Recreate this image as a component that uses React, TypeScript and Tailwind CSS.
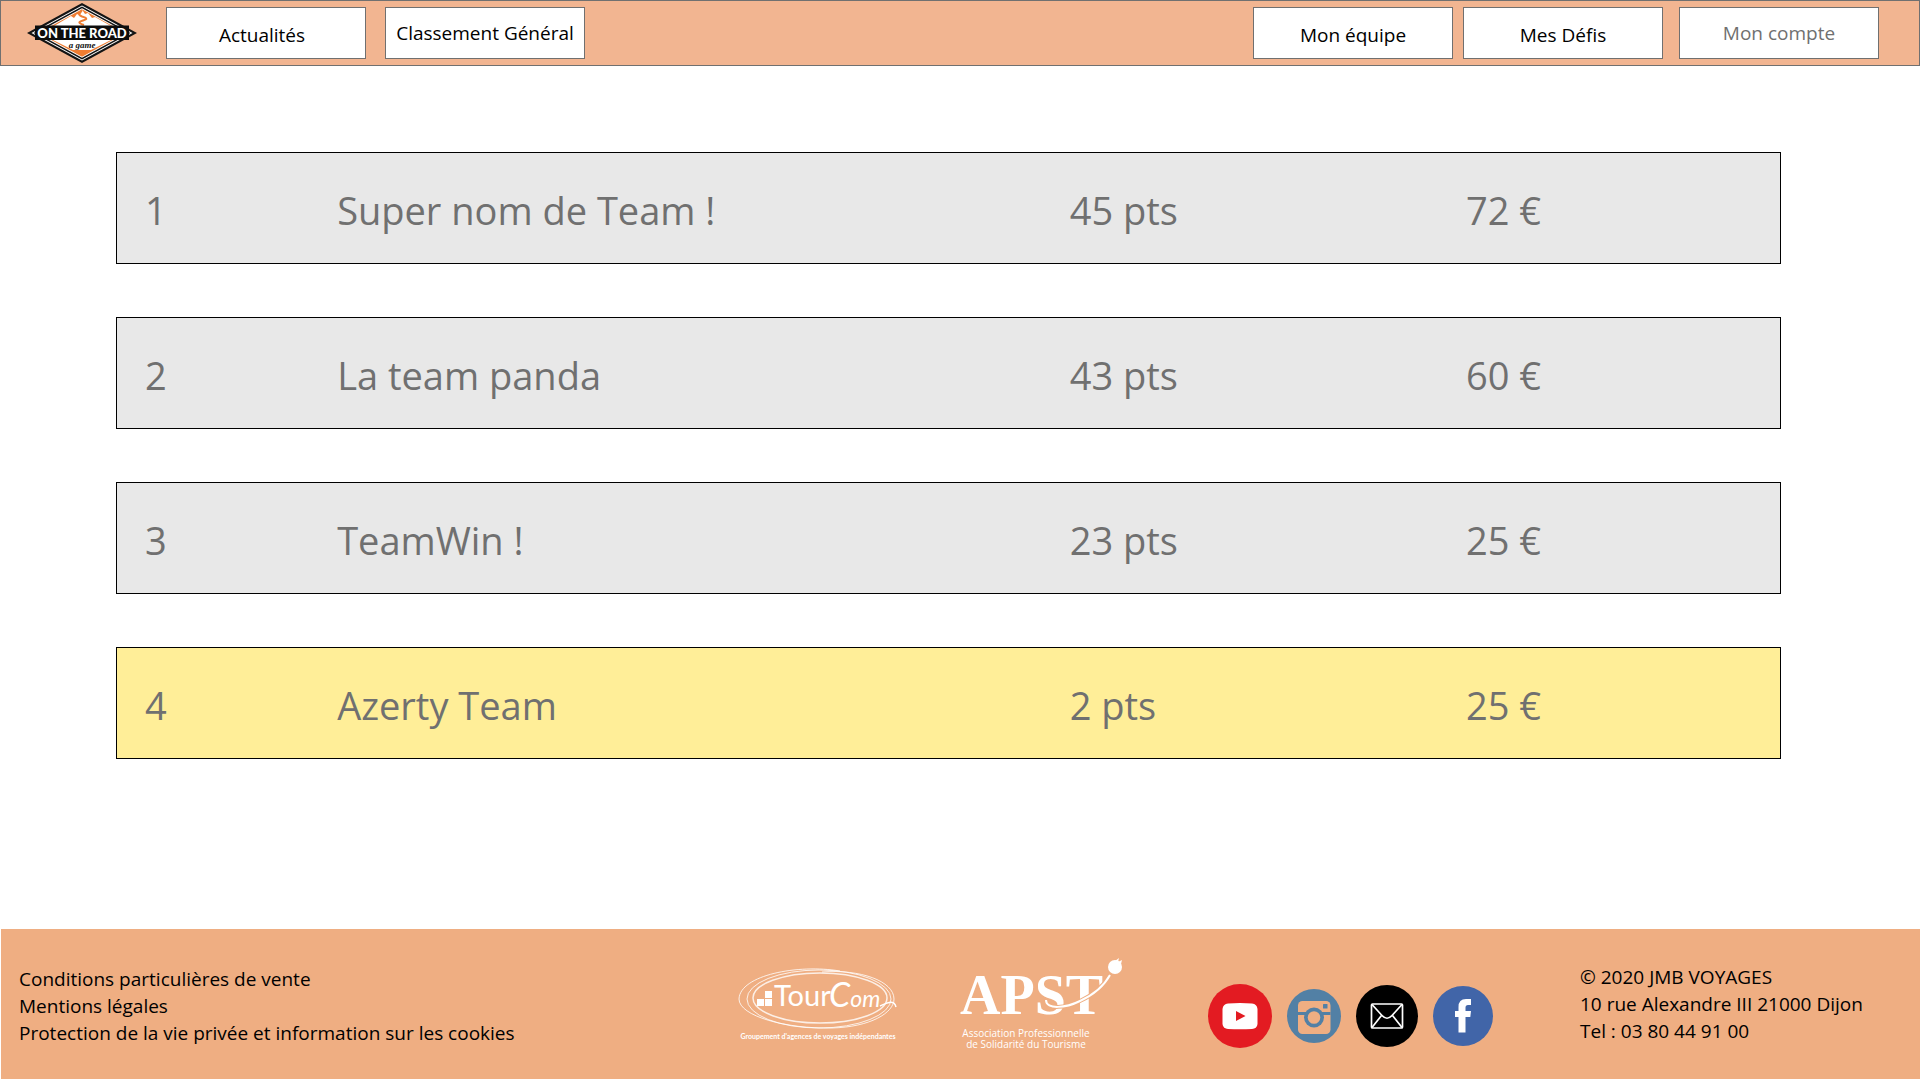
import React from "react";

type Team = { rank: number; name: string; points: string; amount: string; own?: boolean };

const teams: Team[] = [
  { rank: 1, name: "Super nom de Team !", points: "45 pts", amount: "72 €" },
  { rank: 2, name: "La team panda", points: "43 pts", amount: "60 €" },
  { rank: 3, name: "TeamWin !", points: "23 pts", amount: "25 €" },
  { rank: 4, name: "Azerty Team", points: "2 pts", amount: "25 €", own: true },
];

function NavLink({ label, className = "" }: { label: string; className?: string }) {
  return (
    <a
      href="#"
      className={`flex h-[52px] w-[200px] shrink-0 items-center justify-center whitespace-nowrap border border-[#707070] bg-white text-[19px] leading-6 ${className}`}
    >
      {label}
    </a>
  );
}

/* Diamond badge of the game */
function RoadLogo() {
  return (
    <svg viewBox="0 0 110 60" className="h-[60px] w-[110px]" role="img" aria-label="On the road, a game">
      <path d="M55 0 110 30 55 60 0 30Z" fill="#141414" />
      <path d="M55 2.4 105.5 30 55 57.600 4.500 30Z" fill="#fff" />
      <path d="M55 3.400 103.500 30 55 56.600 6.500 30Z" fill="#141414" />
      <path d="M55 5.300 100.500 30 55 54.700 9.500 30Z" fill="#fff" />
      <path d="M55 6.300 98.500 30 55 53.700 11.500 30Z" fill="#ee7d33" />
      <path d="M27 23 44 13 47 15 50 11 52 12 55 6.500 58 11 61 10 65 15 68 14 84 23V37L64 47H46L26 37Z" fill="#fff" />
      <path d="M55 7C52 11 51 12 55 13.500C60 15 61 16 56 17.500C51 19 51 20 57 22" fill="none" stroke="#ee7d33" strokeWidth="2" />
      <path d="M46 48H64L55 53Z" fill="#ee7d33" />
      <rect x="8" y="22.500" width="94" height="14.500" fill="#0d0d0d" />
      <text x="55" y="34.500" textAnchor="middle" fontFamily="Lato, sans-serif" fontWeight="900" fontSize="13" fill="#fff">
        ON THE ROAD
      </text>
      <text x="55" y="45" textAnchor="middle" fontFamily="'Liberation Serif', serif" fontStyle="italic" fontWeight="700" fontSize="9" fill="#141414">
        a game
      </text>
    </svg>
  );
}

function TourComLogo() {
  return (
    <svg viewBox="0 0 164 78" className="h-[78px] w-[164px]" role="img" aria-label="TourCom, Groupement d'agences de voyages indépendantes">
      <g fill="none" stroke="#fff" strokeOpacity="0.8">
        <ellipse cx="81" cy="34" rx="72" ry="29" strokeWidth="1" />
        <ellipse cx="82" cy="33" rx="67" ry="25" strokeWidth="1.500" />
        <path d="M102 6C60 -1 2 10 1 34C1 51 48 64 94 63C132 62 156 48 156 34C156 16 122 4 84 7" strokeWidth="1" />
      </g>
      <g fill="#fff">
        <rect x="19" y="34" width="7" height="7" />
        <rect x="27" y="34" width="7" height="7" />
        <rect x="27" y="26" width="7" height="7" />
        <text x="36" y="41" fontFamily="Lato, sans-serif" fontSize="29" fontWeight="400">Tour</text>
        <text x="91" y="42" fontFamily="Lato, sans-serif" fontStyle="italic" fontWeight="400">
          <tspan fontSize="34">C</tspan>
          <tspan fontSize="23">om</tspan>
        </text>
        <text x="80" y="74" textAnchor="middle" fontFamily="Lato, sans-serif" fontSize="7" fontWeight="700">
          Groupement d'agences de voyages indépendantes
        </text>
      </g>
      <path d="M142 41C149 38 156 34 158 42" fill="none" stroke="#fff" strokeWidth="1.500" />
    </svg>
  );
}

function ApstLogo() {
  return (
    <svg viewBox="0 0 164 92" className="h-[92px] w-[164px]" role="img" aria-label="APST, Association Professionnelle de Solidarité du Tourisme">
      <g fill="#fff">
        <text x="0" y="56" fontFamily="'Liberation Serif', serif" fontSize="56" fontWeight="700">APST</text>
        <circle cx="155" cy="9" r="7" />
        <path d="M155 3 159 0 158 4 162 2 161 6Z" />
        <text x="66" y="79" textAnchor="middle" fontFamily="'Open Sans', sans-serif" fontSize="10">
          Association Professionnelle
        </text>
        <text x="66" y="90" textAnchor="middle" fontFamily="'Open Sans', sans-serif" fontSize="10">
          de Solidarité du Tourisme
        </text>
      </g>
      <path d="M86 42C86 52 106 50 120 43C135 36 144 28 150 17" fill="none" stroke="#efae82" strokeWidth="4" />
      <path d="M86 42C86 52 106 50 120 43C135 36 144 28 150 17" fill="none" stroke="#fff" strokeWidth="2" />
    </svg>
  );
}

function SocialLinks() {
  return (
    <div className="flex items-center gap-[15px]">
      <a href="#" aria-label="YouTube">
        <svg viewBox="0 0 64 64" className="size-16">
          <circle cx="32" cy="32" r="32" fill="#e31b22" />
          <path d="M20 19.500Q32 18.500 44 19.500Q49 20 49.500 25V40Q49 44.500 44 45Q32 45.500 20 45Q15 44.500 14.500 40V25Q15 20 20 19.500Z" fill="#fff" />
          <path d="M28 27V37L37.500 32Z" fill="#e31b22" />
        </svg>
      </a>
      <a href="#" aria-label="Instagram">
        <svg viewBox="0 0 54 54" className="size-[54px]">
          <circle cx="27" cy="27" r="27" fill="#5280a5" />
          <rect x="11" y="12" width="32.500" height="33" rx="4.500" fill="#efae82" />
          <path d="M11 24.500H43.500" stroke="#5280a5" strokeWidth="3" />
          <circle cx="27" cy="28.500" r="10" fill="#5280a5" />
          <circle cx="27" cy="28.500" r="6.300" fill="#efae82" />
          <rect x="36" y="15" width="4.500" height="4.500" rx="0.500" fill="#5280a5" />
        </svg>
      </a>
      <a href="#" aria-label="E-mail">
        <svg viewBox="0 0 62 62" className="size-[62px]">
          <circle cx="31" cy="31" r="31" fill="#000" />
          <g fill="none" stroke="#fff" strokeWidth="1.700" strokeLinejoin="round">
            <rect x="15.500" y="19" width="31" height="24" rx="1" />
            <path d="M16 19.500 26 30.500Q31 36 36 30.500L46 19.500M16 42.500 25.500 30.500M46 42.500 36.500 30.500" />
          </g>
        </svg>
      </a>
      <a href="#" aria-label="Facebook">
        <svg viewBox="0 0 60 60" className="size-[60px]">
          <circle cx="30" cy="30" r="30" fill="#4165a8" />
          <path d="M25.500 46.500V31H22V25H25.500V21Q25.500 13 33 13H38V19H35Q32.500 19 32.500 21.500V25H38L37.300 31H32.500V46.500Z" fill="#fff" />
        </svg>
      </a>
    </div>
  );
}

export default function App() {
  return (
    <div className="flex min-h-screen flex-col bg-white font-['Open_Sans',sans-serif] text-black">
      <header className="flex h-[66px] items-center border border-[#707070] bg-[#f2b591] pl-[26px] pr-10">
        <a href="#" className="mr-[29px] shrink-0">
          <RoadLogo />
        </a>
        <nav className="flex flex-1 items-center">
          <NavLink label="Actualités" className="mr-[19px] pr-2 pt-1" />
          <NavLink label="Classement Général" />
          <NavLink label="Mon équipe" className="ml-auto mr-[10px] pt-1" />
          <NavLink label="Mes Défis" className="mr-4 pt-1" />
          <NavLink label="Mon compte" className="text-[#707070]" />
        </nav>
      </header>

      <main className="flex-1 pl-[116px] pr-[139px] pt-[33px]">
        <table className="w-full table-fixed border-separate border-spacing-x-0 border-spacing-y-[53px] text-left text-[38px] leading-[52px] text-[#707070]">
          <colgroup>
            <col className="w-[11.600%]" />
            <col className="w-[44%]" />
            <col className="w-[23.800%]" />
            <col />
          </colgroup>
          <tbody>
            {teams.map((team) => (
              <tr
                key={team.rank}
                className={
                  "*:h-[112px] *:border-y *:border-black *:pl-[28px] *:pt-1 *:first:border-l *:last:border-r " +
                  (team.own ? "bg-[#ffee98]" : "bg-[#e8e8e8]")
                }
              >
                <th scope="row" className="font-normal">{team.rank}</th>
                <td>{team.name}</td>
                <td>{team.points}</td>
                <td>{team.amount}</td>
              </tr>
            ))}
          </tbody>
        </table>
      </main>

      <footer className="mb-px ml-px grid h-[150px] grid-cols-[719fr_222fr_248fr_372fr_340fr] items-center bg-[#efae82] pl-[18px] text-[19px] leading-[27px]">
        <ul className="whitespace-nowrap pt-1">
          <li><a href="#">Conditions particulières de vente</a></li>
          <li><a href="#">Mentions légales</a></li>
          <li><a href="#">Protection de la vie privée et information sur les cookies</a></li>
        </ul>
        <TourComLogo />
        <ApstLogo />
        <div className="pt-6">
          <SocialLinks />
        </div>
        <address className="whitespace-nowrap not-italic">
          © 2020 JMB VOYAGES
          <br />
          10 rue Alexandre III 21000 Dijon
          <br />
          Tel : 03 80 44 91 00
        </address>
      </footer>
    </div>
  );
}
